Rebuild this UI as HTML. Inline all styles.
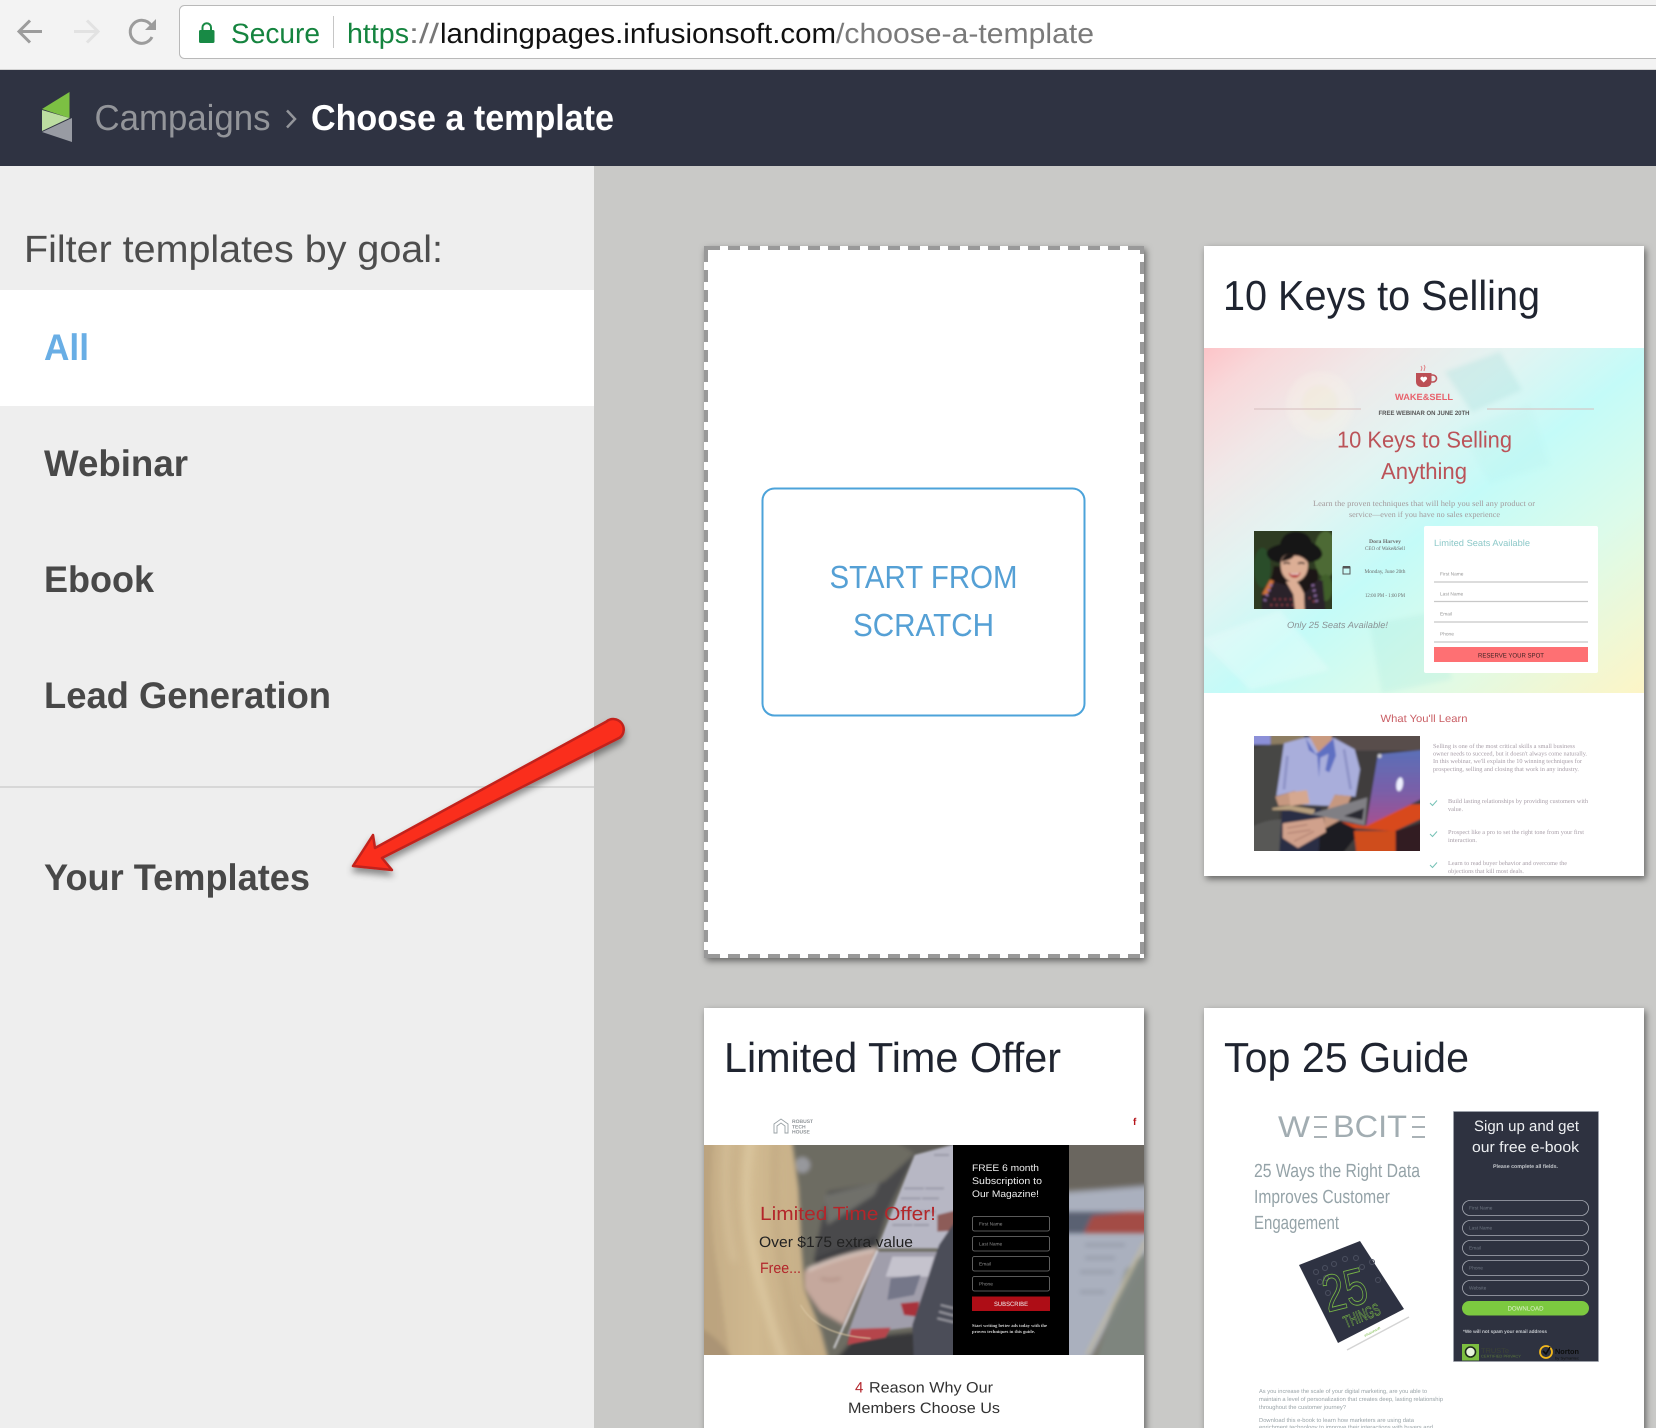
<!DOCTYPE html>
<html><head><meta charset="utf-8"><title>Choose a template</title>
<style>
html,body{margin:0;padding:0;background:#c9c9c7;overflow:hidden}
svg{display:block;font-family:"Liberation Sans",sans-serif;text-rendering:geometricPrecision}
.s{font-family:"Liberation Serif",serif}
.m{text-anchor:middle}
</style></head><body>
<svg width="1656" height="1428" viewBox="0 0 1656 1428" xmlns="http://www.w3.org/2000/svg">
<defs>
<filter id="sh" x="-10%" y="-10%" width="120%" height="120%"><feDropShadow dx="2" dy="3" stdDeviation="3.5" flood-color="#000" flood-opacity=".5"/></filter>
<filter id="ash" x="-10%" y="-20%" width="120%" height="140%"><feDropShadow dx="0" dy="5" stdDeviation="3.5" flood-color="#000" flood-opacity=".42"/></filter>
<filter id="b0" x="-5%" y="-5%" width="110%" height="110%"><feGaussianBlur stdDeviation=".35"/></filter>
<filter id="pb2" x="-10%" y="-10%" width="120%" height="120%"><feGaussianBlur stdDeviation="2"/></filter>
<filter id="pb3" x="-10%" y="-10%" width="120%" height="120%"><feGaussianBlur stdDeviation="3"/></filter>
<filter id="pb6" x="-10%" y="-10%" width="120%" height="120%"><feGaussianBlur stdDeviation="6"/></filter>
<filter id="pb12" x="-10%" y="-10%" width="120%" height="120%"><feGaussianBlur stdDeviation="12"/></filter>
<filter id="b2" x="-30%" y="-30%" width="160%" height="160%"><feGaussianBlur stdDeviation="2.500"/></filter>
<linearGradient id="g1" x1="0" y1="0" x2="1" y2="1">
<stop offset="0" stop-color="#fdc4c8"/><stop offset=".08" stop-color="#f8d8da"/><stop offset=".2" stop-color="#f0e8e8"/><stop offset=".36" stop-color="#e2f4f2"/><stop offset=".52" stop-color="#c4fbf8"/><stop offset=".72" stop-color="#dcfbea"/><stop offset="1" stop-color="#fdf5c6"/>
</linearGradient>
<linearGradient id="lid" x1="0" y1="0" x2="0" y2="1"><stop offset="0" stop-color="#5a70b8"/><stop offset=".55" stop-color="#7a5fa8"/><stop offset="1" stop-color="#a84f90"/></linearGradient>
<linearGradient id="hair" x1="0" y1="0" x2="1" y2="0"><stop offset="0" stop-color="#c2aa84"/><stop offset=".45" stop-color="#d0b990"/><stop offset="1" stop-color="#c2aa84"/></linearGradient>
<clipPath id="c2"><rect x="1204" y="246" width="440" height="630"/></clipPath>
<clipPath id="h2"><rect x="1204" y="348" width="440" height="345"/></clipPath>
<clipPath id="h3"><rect x="704" y="1145" width="440" height="210"/></clipPath>
<clipPath id="w"><rect x="0" y="0" width="234" height="234"/></clipPath>
<clipPath id="man"><rect x="0" y="0" width="498" height="345"/></clipPath>
<clipPath id="hl"><rect x="0" y="0" width="750" height="630"/></clipPath>
</defs>

<!-- browser chrome -->
<rect width="1656" height="70" fill="#f3f3f3"/>
<rect y="69" width="1656" height="1" fill="#d2d2d2"/>
<g fill="none" stroke-width="3">
<path d="M42 31.500H20M30 20.500 19 31.500 30 42.500" stroke="#9c9c9c"/>
<path d="M74 31.500H97M87 20.500 98 31.500 87 42.500" stroke="#e2e2e2"/>
<path d="M152 37a11.500 11.500 0 1 1-1-12" stroke="#9c9c9c"/>
</g>
<path d="M156 19v11h-11z" fill="#9c9c9c"/>
<rect x="179.500" y="5.500" width="1500" height="53" rx="5" fill="#fff" stroke="#b9b9b9"/>
<rect x="199" y="30" width="15.500" height="13" rx="1.500" fill="#188a45"/>
<path d="M202.500 30v-2.500a4.200 4.200 0 0 1 8.500 0V30" fill="none" stroke="#188a45" stroke-width="2"/>
<text x="231" y="43" font-size="28" fill="#15843f" textLength="89" lengthAdjust="spacingAndGlyphs">Secure</text>
<rect x="333" y="16" width="1" height="32" fill="#c6c6c6"/>
<text x="347" y="43" font-size="28" fill="#15843f" textLength="62" lengthAdjust="spacingAndGlyphs">https</text>
<text x="409" y="43" font-size="28" fill="#777" textLength="30" lengthAdjust="spacingAndGlyphs">://</text>
<text x="440" y="43" font-size="28" fill="#111" textLength="396" lengthAdjust="spacingAndGlyphs">landingpages.infusionsoft.com</text>
<text x="836" y="43" font-size="28" fill="#7a7a7a" textLength="258" lengthAdjust="spacingAndGlyphs">/choose-a-template</text>

<!-- header -->
<rect y="70" width="1656" height="96" fill="#2f3342"/>
<path d="M69.500 92 42 109 69.500 118z" fill="#7cc043"/>
<path d="M42 110 69.500 118 42 131z" fill="#bcdda1"/>
<path d="M72 118v24l-30-10z" fill="#989ba3"/>
<text x="94.500" y="130" font-size="36" fill="#93959a" textLength="176" lengthAdjust="spacingAndGlyphs">Campaigns</text>
<path d="M287 110.500l8 8.500-8 8.500" fill="none" stroke="#93959a" stroke-width="2.500"/>
<text x="311" y="130" font-size="36" font-weight="bold" fill="#fff" textLength="303" lengthAdjust="spacingAndGlyphs">Choose a template</text>

<!-- sidebar -->
<rect y="166" width="594" height="1262" fill="#eeeeee"/>
<rect y="290" width="594" height="116" fill="#fff"/>
<rect y="786" width="594" height="2" fill="#d7d7d7"/>
<text x="24" y="262" font-size="38" fill="#4d4d4d" textLength="419" lengthAdjust="spacingAndGlyphs">Filter templates by goal:</text>
<text x="44" y="360" font-size="37" font-weight="bold" fill="#69aee5" textLength="45" lengthAdjust="spacingAndGlyphs">All</text>
<text x="44" y="476" font-size="37" font-weight="bold" fill="#484848" textLength="144" lengthAdjust="spacingAndGlyphs">Webinar</text>
<text x="44" y="592" font-size="37" font-weight="bold" fill="#484848" textLength="110" lengthAdjust="spacingAndGlyphs">Ebook</text>
<text x="44" y="708" font-size="37" font-weight="bold" fill="#484848" textLength="287" lengthAdjust="spacingAndGlyphs">Lead Generation</text>
<text x="44" y="890" font-size="37" font-weight="bold" fill="#484848" textLength="266" lengthAdjust="spacingAndGlyphs">Your Templates</text>

<!-- scratch card -->
<rect x="704" y="246" width="440" height="712" fill="#fff" filter="url(#sh)"/>
<g stroke="#999" stroke-width="4" stroke-dasharray="12 8" fill="none">
<path d="M708 248H1144"/><path d="M708 956H1144"/>
<path d="M706 250V958"/><path d="M1142 262V958"/>
</g>
<rect x="704" y="246" width="4" height="4" fill="#999"/>
<rect x="1140" y="246" width="4" height="8" fill="#999"/>
<rect x="762.500" y="488.500" width="322" height="227" rx="12" fill="#fff" stroke="#4ca3da" stroke-width="2"/>
<text x="923.500" y="588" class="m" font-size="32" fill="#55a0d5" textLength="188" lengthAdjust="spacingAndGlyphs">START FROM</text>
<text x="923.500" y="636" class="m" font-size="32" fill="#55a0d5" textLength="141" lengthAdjust="spacingAndGlyphs">SCRATCH</text>

<!-- card 2 -->
<rect x="1204" y="246" width="440" height="630" fill="#fff" filter="url(#sh)"/>
<text x="1223" y="310" font-size="42" fill="#1f2430" textLength="317" lengthAdjust="spacingAndGlyphs">10 Keys to Selling</text>
<rect x="1204" y="348" width="440" height="345" fill="url(#g1)"/>
<g clip-path="url(#h2)">
<g filter="url(#b2)" opacity=".32">
<circle cx="1320" cy="405" r="34" fill="#f8f4ea"/><circle cx="1320" cy="403" r="18" fill="#f5f1cf"/>
<path d="M1445 372l55-20 22 38-50 22z" fill="#a5dfdc"/>
<path d="M1460 430l70-25 20 60-60 18z" fill="#b7f2ec" opacity=".6"/>
<path d="M1370 625l60-12 22 66-70 14z" fill="#a7e8dc" opacity=".8"/>
<path d="M1200 640l80-30 50 60-80 20z" fill="#f2fdfc"/>
</g>
<g filter="url(#b0)">
<path d="M1416 373h15.500v9a5 5 0 0 1-5 5h-5.500a5 5 0 0 1-5-5z" fill="#bc4f55"/>
<path d="M1431.500 375h1.500a3 3 0 0 1 0 7h-1.500" fill="none" stroke="#bc4f55" stroke-width="1.600"/>
<path d="M1423.700 382.500l-3-3a1.800 1.800 0 0 1 3-2 1.800 1.800 0 0 1 3 2z" fill="#fff"/>
<path d="M1421 371l1-3-1-2M1424 371l1-4-1-2" fill="none" stroke="#e08488" stroke-width="1"/>
<text x="1395" y="400" font-size="9" font-weight="bold" fill="#e8626c" textLength="58" lengthAdjust="spacingAndGlyphs">WAKE&amp;SELL</text>
<path d="M1254 409h107M1487 409h107" stroke="#d6bdbd" stroke-width="1"/>
<text x="1424" y="415" class="m" font-size="6.300" font-weight="bold" fill="#575757" textLength="91" lengthAdjust="spacingAndGlyphs">FREE WEBINAR ON JUNE 20TH</text>
<text x="1424.500" y="447.500" class="m" font-size="23" fill="#bb5259" textLength="175" lengthAdjust="spacingAndGlyphs">10 Keys to Selling</text>
<text x="1424" y="479" class="m" font-size="23" fill="#bb5259" textLength="86" lengthAdjust="spacingAndGlyphs">Anything</text>
<text x="1424" y="506" class="m s" font-size="8" fill="#a39a9c" textLength="222" lengthAdjust="spacingAndGlyphs">Learn the proven techniques that will help you sell any product or</text>
<text x="1424.500" y="517" class="m s" font-size="8" fill="#a39a9c" textLength="151" lengthAdjust="spacingAndGlyphs">service—even if you have no sales experience</text>
<text x="1385" y="543" class="m s" font-size="5.500" fill="#6c6c6c" font-weight="bold" textLength="32" lengthAdjust="spacingAndGlyphs">Dora Harvey</text>
<text x="1385" y="550" class="m s" font-size="5.500" fill="#6c6c6c" textLength="40" lengthAdjust="spacingAndGlyphs">CEO of Wake&amp;Sell</text>
<text x="1385" y="573" class="m s" font-size="5.500" fill="#6c6c6c" textLength="41" lengthAdjust="spacingAndGlyphs">Monday, June 20th</text>
<text x="1385" y="597" class="m s" font-size="5.500" fill="#6c6c6c" textLength="40" lengthAdjust="spacingAndGlyphs">12:00 PM - 1:00 PM</text>
<rect x="1343" y="567" width="7" height="7" fill="none" stroke="#555" stroke-width="1"/><rect x="1343" y="566" width="7" height="2.500" fill="#555"/>
<text x="1287" y="628" font-size="9" font-style="italic" fill="#8b9396" textLength="101" lengthAdjust="spacingAndGlyphs">Only 25 Seats Available!</text>
<rect x="1424" y="526" width="174" height="147" rx="2" fill="#fff"/>
<text x="1434" y="546" font-size="9" fill="#8cc8c8" textLength="96" lengthAdjust="spacingAndGlyphs">Limited Seats Available</text>
<g font-size="4.800" fill="#9a9a9a">
<text x="1440" y="575.500">First Name</text><text x="1440" y="595.500">Last Name</text><text x="1440" y="615.500">Email</text><text x="1440" y="635.500">Phone</text>
</g>
<path d="M1434 582h154M1434 601.500h154M1434 622h154M1434 642h154" stroke="#c8c8c8" stroke-width="1.300"/>
<rect x="1434" y="647" width="154" height="15" fill="#fe6f73"/>
<text x="1511" y="657.500" class="m" font-size="6.400" fill="#3d2323" textLength="66" lengthAdjust="spacingAndGlyphs">RESERVE YOUR SPOT</text>
</g>
<!-- woman photo -->
<g transform="translate(1254 531) scale(.33333)"><g clip-path="url(#w)"><g filter="url(#pb3)">
<rect x="-20" y="-20" width="274" height="274" fill="#2d3a24"/>
<ellipse cx="215" cy="70" rx="35" ry="70" fill="#4e6b34"/>
<ellipse cx="25" cy="110" rx="25" ry="60" fill="#2c4e2c"/>
<ellipse cx="215" cy="170" rx="20" ry="40" fill="#3f5f2c"/>
<path d="M55 130q-15 40 -5 70l120 -5q30-30 20-80l-130-10z" fill="#1c1412"/>
<path d="M78 40q8-35 45-38 40 0 50 32 30 14 32 36-4 20-40 24-40 8-85 2-40-6-42-30 2-16 40-26z" fill="#141418"/>
<path d="M80 100q0-34 42-34 38 0 40 36 0 40-40 54-42-10-42-56z" fill="#dcae95"/>
<path d="M82 92q6-26 40-28 32 0 40 30-20-22-42-20-4 12-38 18z" fill="#1c1412"/>
<path d="M88 98q10-6 20 0M132 98q10-6 20 0" stroke="#33221e" stroke-width="5" fill="none"/>
<path d="M104 126q18 6 36-2-4 16-18 16t-18-14z" fill="#b6282c"/>
<path d="M109 127q14 4 26-1l-3 5h-20z" fill="#fff"/>
<path d="M22 260l2-70 22-42 50 14 32 20 30 0 30-34 18 0 10 112z" fill="#2c2029"/>
<path d="M24 190l24-44 12 4-20 40z" fill="#cc7238"/>
<path d="M32 210l20-50M176 160l14 60" stroke="#8b6aa0" stroke-width="9" stroke-dasharray="6 10" fill="none"/>
<path d="M60 205h80M50 222h100M165 200l25 20" stroke="#a8484e" stroke-width="5" stroke-dasharray="4 12" fill="none"/>
<path d="M96 152l30-2q14 14 24 38l2 60h-28l-6-58z" fill="#dcae95"/>
</g></g></g>
</g>
<g clip-path="url(#c2)" filter="url(#b0)">
<text x="1424" y="722" class="m" font-size="10.500" fill="#c95d64" textLength="87" lengthAdjust="spacingAndGlyphs">What You'll Learn</text>
<g class="s" font-size="6.200" fill="#a89ea8">
<text x="1433" y="748" textLength="142" lengthAdjust="spacingAndGlyphs">Selling is one of the most critical skills a small business</text>
<text x="1433" y="755.500" textLength="154" lengthAdjust="spacingAndGlyphs">owner needs to succeed, but it doesn't always come naturally.</text>
<text x="1433" y="763" textLength="149" lengthAdjust="spacingAndGlyphs">In this webinar, we'll explain the 10 winning techniques for</text>
<text x="1433" y="771" textLength="146" lengthAdjust="spacingAndGlyphs">prospecting, selling and closing that work in any industry.</text>
<text x="1448" y="803" textLength="140" lengthAdjust="spacingAndGlyphs">Build lasting relationships by providing customers with</text>
<text x="1448" y="811" textLength="15" lengthAdjust="spacingAndGlyphs">value.</text>
<text x="1448" y="834" textLength="136" lengthAdjust="spacingAndGlyphs">Prospect like a pro to set the right tone from your first</text>
<text x="1448" y="842" textLength="29" lengthAdjust="spacingAndGlyphs">interaction.</text>
<text x="1448" y="865" textLength="119" lengthAdjust="spacingAndGlyphs">Learn to read buyer behavior and overcome the</text>
<text x="1448" y="873" textLength="76" lengthAdjust="spacingAndGlyphs">objections that kill most deals.</text>
</g>
<path d="M1430 803l2.500 2.500 4.500-5M1430 834l2.500 2.500 4.500-5M1430 865l2.500 2.500 4.500-5" fill="none" stroke="#76c2b6" stroke-width="1"/>
</g>
<!-- man photo -->
<g transform="translate(1254 736) scale(.33333)"><g clip-path="url(#man)"><g filter="url(#pb3)">
<rect x="-30" y="-30" width="560" height="410" fill="#3f3d3c"/>
<rect x="-30" y="-30" width="80" height="56" fill="#8c90d8"/>
<rect x="50" y="-30" width="100" height="56" fill="#8d7d62"/>
<rect x="240" y="-30" width="290" height="74" fill="#584d4c"/>
<path d="M-20 45q60-25 130-20l-30 140-5 85-95 30z" fill="#474645"/>
<path d="M-20 280q50-30 103-30l-5 125H-20z" fill="#595857"/>
<path d="M84 220l116-6 20 160H74z" fill="#2b2f45"/>
<path d="M200 250l100 10 8 40-60 75h-55z" fill="#1c1c22"/>
<path d="M90 22 155 4l85 2 62 34 16 60-14 82-62-6-4 34-115-5-2-40-54 15 12-80z" fill="#a9aedb"/>
<path d="M155 -20h80l-2 35-40 35z" fill="#c99a80"/>
<path d="M155 6l30 48 8-5 45-42 8 52-20 50-12-6 10-50-25 12-4 60-5-66-25-16z" fill="#5f70c2"/>
<path d="M100 60l-10 100M270 40l20 120" stroke="#8d92c6" stroke-width="8" fill="none"/>
<path d="M64 182l60-18 2 42-52 4z" fill="#c69880"/>
<path d="M104 170l55-8 8 40-58 8z" fill="#d6a890"/>
<path d="M242 176l50 4-30 70-50 28-2-38z" fill="#c69880"/>
<path d="M55 216l50-8 78 12-5 16-70-14-53 0z" fill="#b79f7e"/>
<path d="M86 262l122-18 8 44-84 48-46-30z" fill="#d0a18c"/>
<path d="M100 276l60-10M100 292l70-10M120 316l60-30" stroke="#a8786a" stroke-width="3" fill="none"/>
<path d="M170 234l170-50-8 84z" fill="#807f84"/>
<path d="M270 240l60-24-5 36z" fill="#2b2b30"/>
<path d="M300 285h125v90H310z" fill="#cf4e1e"/>
<path d="M425 285l105-34v124H425z" fill="#301e24"/>
<path d="M260 256l70 14 140-65h60v30l-110 51-120-10z" fill="#d8491c"/>
<path d="M372 55l158-15v135L336 270z" fill="url(#lid)"/>
<circle cx="377" cy="60" r="6" fill="#c8c8d0"/>
<ellipse cx="437" cy="145" rx="10" ry="21" fill="#eef0ff" transform="rotate(8 437 145)"/>
</g></g></g>

<!-- card 3 -->
<rect x="704" y="1008" width="440" height="440" fill="#fff" filter="url(#sh)"/>
<text x="724" y="1072" font-size="42" fill="#1f2430" textLength="337" lengthAdjust="spacingAndGlyphs">Limited Time Offer</text>
<g filter="url(#b0)">
<path d="M774 1133v-9l7-5 7 5v9h-3v-7l-4-3-4 3v7z" fill="none" stroke="#98a0a4" stroke-width=".9"/>
<g font-size="5" font-weight="bold" fill="#8f9498"><text x="792" y="1123">ROBUST</text><text x="792" y="1128.500">TECH</text><text x="792" y="1133.500">HOUSE</text></g>
<text x="1133" y="1125" font-size="10" font-weight="bold" fill="#b5121b">f</text>
</g>
<g clip-path="url(#h3)">
<rect x="704" y="1145" width="440" height="210" fill="#75736b"/>
<!-- left photo in 3x coords -->
<g transform="translate(704 1145) scale(.33333)"><g clip-path="url(#hl)">
<g filter="url(#pb6)">
<rect x="-30" y="-30" width="810" height="690" fill="#6d6c62"/>
<path d="M560 -20h220v60L640 30z" fill="#5c5a54"/>
<path d="M640 20 540 110l-170 30-40 200 10 40 180-80 30-100z" fill="#48494b"/>
<path d="M360 150l170-40-20 40-140 90z" fill="#6f6f6b"/>
<path d="M330 340l190-70-10 50-170 60z" fill="#3c3d40"/>
<path d="M380 660l70-80 190-20 60 100z" fill="#38383a"/>
<circle cx="295" cy="60" r="24" fill="#97989c"/>
<path d="M300 380q100-50 220-70l-20 70-50 90-30 70-70-40-50-70z" fill="#c5a89d"/>
<path d="M310 375q100-45 205-62" stroke="#e6d5cc" stroke-width="8" fill="none"/>
<path d="M410 400q-30 10-60 0" stroke="#a88478" stroke-width="5" fill="none"/>
</g>
<g filter="url(#pb3)">
<path d="M520 310 632 30l148-40v200l-65 120z" fill="#b7b7c4"/>
<path d="M520 320h185l-65 225-210 25z" fill="#a09eab"/>
<path d="M520 316 390 610" stroke="#e4e3ea" stroke-width="5" fill="none"/>
<path d="M565 335h125l-18 60H545z" fill="#c5c3cd"/>
<path d="M560 400l90-10-20 60-80 15z" fill="#757789"/>
<path d="M590 475l55-5-5 45-40-5z" fill="#a8323a"/>
<path d="M440 552l120-4-15 30-115 22z" fill="#b5444b"/>
<path d="M700 210l80-20v65l-80 5z" fill="#8d5c58"/>
<path d="M705 300l75-110v470H630l-5-120z" fill="#4c4d58"/>
<path d="M710 480l40 10M705 500l45 12M700 520l50 12" stroke="#a0a0a8" stroke-width="5" fill="none"/>
<path d="M600 130h120M590 160h115M575 200h120M565 240h110M690 30h45" stroke="#9a9aa8" stroke-width="6" stroke-dasharray="60 4" fill="none"/>
</g>
<g filter="url(#pb6)">
<path d="M-30 -30h292l22 160 8 170 10 130 50 130 26 100H-30z" fill="url(#hair)"/>
<path d="M-30 540q90 40 120 120H-30z" fill="#8d7862"/>
<path d="M-30 -30h60q-20 240 10 400l40 290H-30z" fill="#b8a07c" opacity=".7"/>
</g>
<g filter="url(#pb12)" opacity=".7">
<path d="M140 -20q-30 190 10 360t90 310" stroke="#e2cfa8" stroke-width="22" fill="none"/>
<path d="M215 -20q-15 220 25 420t80 250" stroke="#bda47e" stroke-width="16" fill="none"/>
<path d="M70 -20q-20 180 20 370" stroke="#dac6a0" stroke-width="16" fill="none"/>
</g>
<path d="M290 480q50 90 210 100" stroke="#d9c6a2" stroke-width="3" fill="none" filter="url(#pb2)"/>
</g></g>
<g filter="url(#pb3)">
<rect x="1060" y="1140" width="100" height="220" fill="#7a776c"/>
<rect x="1060" y="1140" width="100" height="50" fill="#6a665f"/>
<path d="M1060 1193l100-8v48l-74 130h-26z" fill="#aab0be"/>
</g>
<g filter="url(#b2)" opacity=".95">
<path d="M1060 1212h100v21h-100z" fill="#565d6e"/>
<path d="M1092 1216l36-4h32v21h-76z" fill="#a3463f"/>
<path d="M1126 1270l34-30v125h-66z" fill="#7f8680"/>
<path d="M1146 1240l-59 115" stroke="#c4bca0" stroke-width="3" fill="none"/>
<path d="M1085 1245h40M1085 1258h30M1080 1272h34M1080 1292h25" stroke="#8c92a0" stroke-width="2" fill="none"/>
</g>
<rect x="953" y="1145" width="116" height="210" fill="#000"/>
<g filter="url(#b0)">
<g font-size="9.500" fill="#eee">
<text x="972" y="1171" textLength="67" lengthAdjust="spacingAndGlyphs">FREE 6 month</text>
<text x="972" y="1184" textLength="70" lengthAdjust="spacingAndGlyphs">Subscription to</text>
<text x="972" y="1197" textLength="67" lengthAdjust="spacingAndGlyphs">Our Magazine!</text>
</g>
<g fill="none" stroke="#777" stroke-width=".8">
<rect x="972.500" y="1216.500" width="77" height="14.500" rx="2"/><rect x="972.500" y="1236.500" width="77" height="14.500" rx="2"/><rect x="972.500" y="1256.500" width="77" height="14.500" rx="2"/><rect x="972.500" y="1276.500" width="77" height="14.500" rx="2"/>
</g>
<g font-size="4.800" fill="#888"><text x="979" y="1225.500">First Name</text><text x="979" y="1245.500">Last Name</text><text x="979" y="1265.500">Email</text><text x="979" y="1285.500">Phone</text></g>
<rect x="972" y="1296.500" width="78" height="14.500" fill="#ae0f16"/>
<text x="1011" y="1306" class="m" font-size="6.200" fill="#eee" textLength="34" lengthAdjust="spacingAndGlyphs">SUBSCRIBE</text>
<g class="s" font-size="4.500" font-weight="bold" fill="#ccc"><text x="972" y="1327" textLength="75" lengthAdjust="spacingAndGlyphs">Start writing better ads today with the</text><text x="972" y="1333" textLength="63" lengthAdjust="spacingAndGlyphs">proven techniques in this guide.</text></g>
<text x="760" y="1220" font-size="19" fill="#b3252c" textLength="176" lengthAdjust="spacingAndGlyphs">Limited Time Offer!</text>
<text x="759" y="1247" font-size="15" fill="#222" textLength="154" lengthAdjust="spacingAndGlyphs">Over $175 extra value</text>
<text x="760" y="1273" font-size="15" fill="#b3252c" textLength="41" lengthAdjust="spacingAndGlyphs">Free...</text>
</g>
</g>
<g filter="url(#b0)">
<text x="855" y="1392.500" font-size="15" fill="#b3252c">4</text>
<text x="869" y="1392.500" font-size="15" fill="#333" textLength="124" lengthAdjust="spacingAndGlyphs">Reason Why Our</text>
<text x="848" y="1413" font-size="15" fill="#333" textLength="152" lengthAdjust="spacingAndGlyphs">Members Choose Us</text>
</g>

<!-- card 4 -->
<rect x="1204" y="1008" width="440" height="440" fill="#fff" filter="url(#sh)"/>
<text x="1224" y="1072" font-size="42" fill="#1f2430" textLength="245" lengthAdjust="spacingAndGlyphs">Top 25 Guide</text>
<g filter="url(#b0)">
<g font-size="31" fill="#a2adb2">
<text x="1278" y="1137" textLength="32" lengthAdjust="spacingAndGlyphs" font-size="30">W</text>
<text x="1333" y="1137" textLength="74" lengthAdjust="spacingAndGlyphs">BCIT</text>
</g>
<path d="M1314 1117h13M1314 1127h13M1314 1137h13M1412 1117h13M1412 1127h13M1412 1137h13" stroke="#8d999e" stroke-width="1.500"/>
<g font-size="19" fill="#95a3a8">
<text x="1254" y="1177" textLength="166" lengthAdjust="spacingAndGlyphs">25 Ways the Right Data</text>
<text x="1254" y="1203" textLength="136" lengthAdjust="spacingAndGlyphs">Improves Customer</text>
<text x="1254" y="1229" textLength="85" lengthAdjust="spacingAndGlyphs">Engagement</text>
</g>
<path d="M1347 1350l62-33" stroke="#d4d4d4" stroke-width="1.500"/>
<path d="M1299 1265l61-24 44 68-66 34z" fill="#2f3342"/>
<g fill="none" stroke="#4b5060" stroke-width="1">
<circle cx="1316" cy="1272" r="2.500"/><circle cx="1325" cy="1268" r="2.500"/><circle cx="1334" cy="1264" r="2.500"/><circle cx="1345" cy="1259" r="2.500"/><circle cx="1356" cy="1258" r="2.500"/><circle cx="1320" cy="1282" r="2.500"/><circle cx="1328" cy="1293" r="2.500"/><circle cx="1362" cy="1267" r="2.500"/><circle cx="1372" cy="1262" r="2.500"/><circle cx="1378" cy="1280" r="2.500"/><circle cx="1326" cy="1278" r="2.500"/>
</g>
<text x="0" y="0" class="m" font-size="52" fill="none" stroke="#79b846" stroke-width=".9" textLength="44" lengthAdjust="spacingAndGlyphs" transform="translate(1349 1307) rotate(-14)">25</text>
<text x="0" y="0" class="m" font-size="17" fill="none" stroke="#79b846" stroke-width=".6" textLength="38" lengthAdjust="spacingAndGlyphs" transform="translate(1364 1321) rotate(-22)">THINGS</text>
<text x="1365" y="1337" font-size="3.500" fill="#79b846" transform="rotate(-28 1365 1337)">infusionsoft</text>
<rect x="1453.500" y="1111.500" width="145" height="250" fill="#2d3240" stroke="#9ea3ad" stroke-width=".7"/>
<text x="1526.500" y="1131" class="m" font-size="15" fill="#eef0f2" textLength="105" lengthAdjust="spacingAndGlyphs">Sign up and get</text>
<text x="1525.500" y="1152" class="m" font-size="15" fill="#eef0f2" textLength="107" lengthAdjust="spacingAndGlyphs">our free e-book</text>
<text x="1525.500" y="1168" class="m" font-size="5.300" font-weight="bold" fill="#c4c7cc" textLength="65" lengthAdjust="spacingAndGlyphs">Please complete all fields.</text>
<g fill="none" stroke="#a9acb5" stroke-width=".8">
<rect x="1462.500" y="1200.500" width="126" height="15" rx="7.500"/><rect x="1462.500" y="1220.500" width="126" height="15" rx="7.500"/><rect x="1462.500" y="1240.500" width="126" height="15" rx="7.500"/><rect x="1462.500" y="1260.500" width="126" height="15" rx="7.500"/><rect x="1462.500" y="1280.500" width="126" height="15" rx="7.500"/>
</g>
<g font-size="4.800" fill="#6e7480"><text x="1469" y="1209.500">First Name</text><text x="1469" y="1229.500">Last Name</text><text x="1469" y="1249.500">Email</text><text x="1469" y="1269.500">Phone</text><text x="1469" y="1289.500">Website</text></g>
<rect x="1462" y="1301" width="127" height="14.500" rx="7.250" fill="#7cc93f"/>
<text x="1525.500" y="1310.500" class="m" font-size="6.200" fill="#e2f2d2" textLength="36" lengthAdjust="spacingAndGlyphs">DOWNLOAD</text>
<text x="1463" y="1333" font-size="4.800" font-weight="bold" fill="#c4c7cc" textLength="84" lengthAdjust="spacingAndGlyphs">*We will not spam your email address</text>
<rect x="1462" y="1344" width="17" height="16.500" fill="#7cbf3f"/>
<circle cx="1470.500" cy="1352" r="5" fill="#e8f5dc" stroke="#1f2a1a" stroke-width="1.600"/>
<text x="1481" y="1353" font-size="7" fill="#3c4436" textLength="28" lengthAdjust="spacingAndGlyphs">TRUSTe</text>
<text x="1481" y="1357.500" font-size="3.800" fill="#5d7a3a" textLength="40" lengthAdjust="spacingAndGlyphs">CERTIFIED PRIVACY</text>
<circle cx="1546" cy="1352" r="6" fill="none" stroke="#f3b71b" stroke-width="1.800"/>
<path d="M1543 1351l3 3 4-7" fill="none" stroke="#111" stroke-width="1.600"/>
<text x="1555" y="1354" font-size="7.500" font-weight="bold" fill="#0d0d0d" textLength="24" lengthAdjust="spacingAndGlyphs">Norton</text>
<text x="1555" y="1359.500" font-size="3.800" fill="#111" textLength="24" lengthAdjust="spacingAndGlyphs">by Symantec</text>
<g font-size="5.800" fill="#9aa4a8">
<text x="1259" y="1393" textLength="168" lengthAdjust="spacingAndGlyphs">As you increase the scale of your digital marketing, are you able to</text>
<text x="1259" y="1401" textLength="184" lengthAdjust="spacingAndGlyphs">maintain a level of personalization that creates deep, lasting relationship</text>
<text x="1259" y="1409" textLength="87" lengthAdjust="spacingAndGlyphs">throughout the customer journey?</text>
<text x="1259" y="1422" textLength="155" lengthAdjust="spacingAndGlyphs">Download this e-book to learn how marketers are using data</text>
<text x="1259" y="1429" textLength="174" lengthAdjust="spacingAndGlyphs">enrichment technology to improve their interactions with buyers and</text>
</g>
</g>

<!-- arrow -->
<path d="M606.500 721.500 375 848 373 835 353 866 392 870 382 858 620 737.500A9.500 9.500 0 0 0 606.500 721.500Z" fill="#fa2e1f" stroke="#c2211a" stroke-width="2.500" stroke-linejoin="round" filter="url(#ash)"/>
</svg>
</body></html>
